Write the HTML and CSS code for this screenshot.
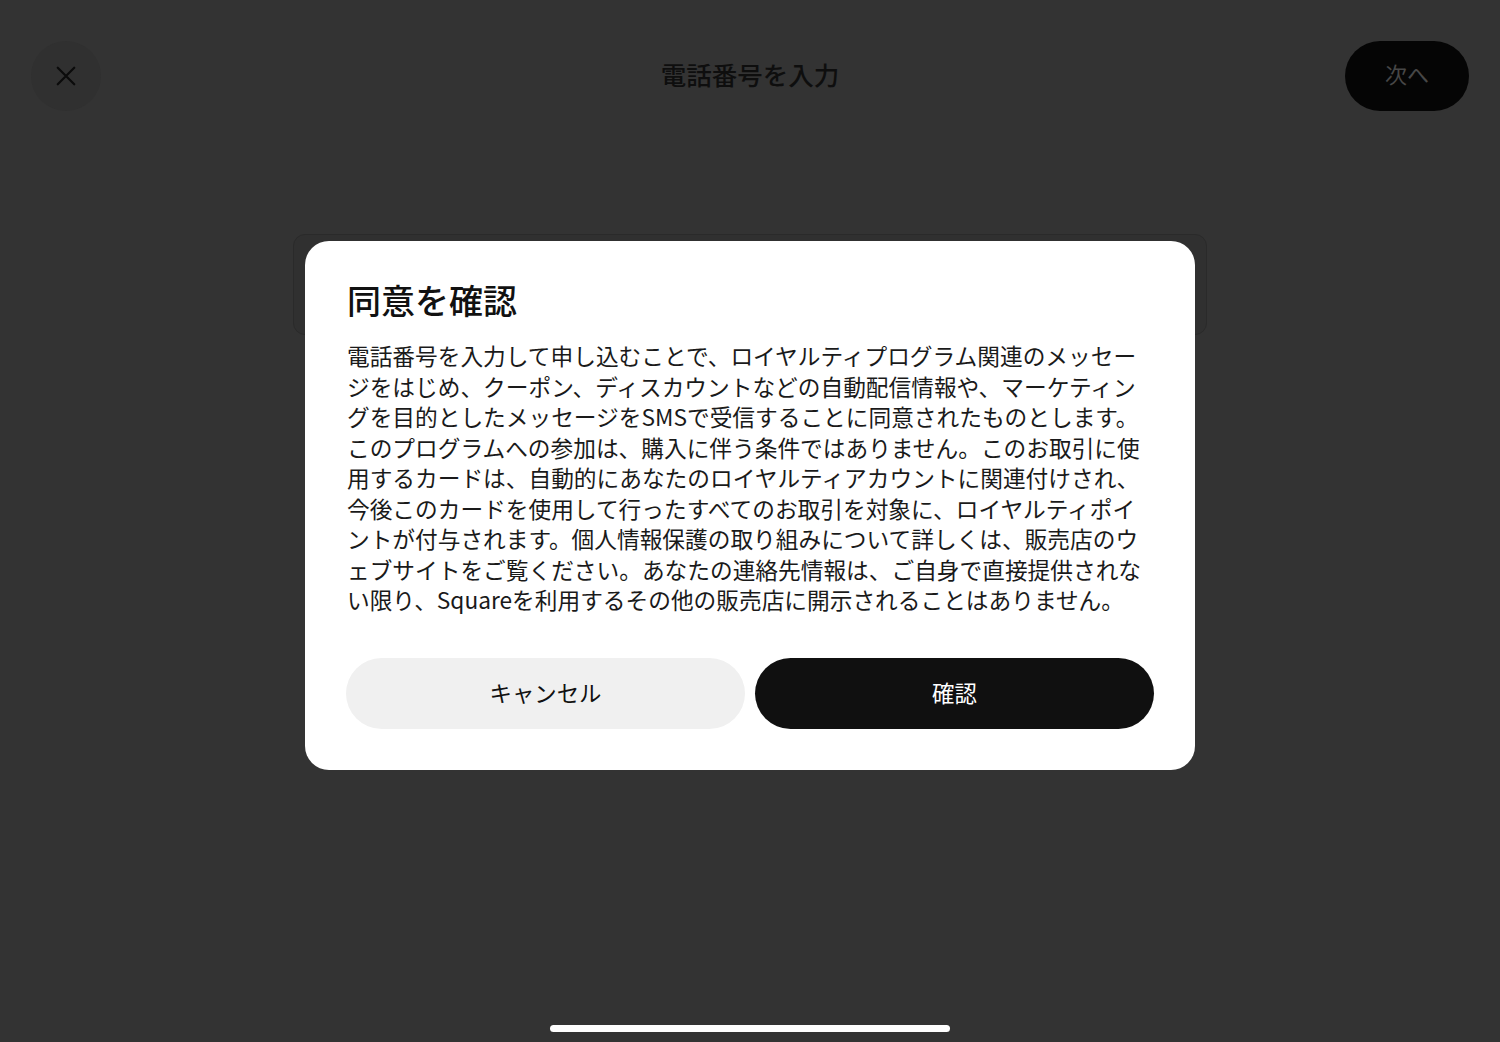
FILE: index.html
```html
<!DOCTYPE html>
<html lang="ja">
<head>
<meta charset="utf-8">
<title>電話番号を入力</title>
<link rel="stylesheet" href="styles.css">
</head>
<body>
<div class="page">
  <header class="topbar">
    <button class="close-btn" aria-label="閉じる">
      <svg width="24" height="24" viewBox="0 0 24 24" aria-hidden="true">
        <path d="M3 3 L21 21 M21 3 L3 21" stroke="#0b0b0b" stroke-width="2.4" stroke-linecap="round" fill="none"/>
      </svg>
    </button>
    <h1 class="page-title">電話番号を入力</h1>
    <button class="next-btn">次へ</button>
  </header>
  <main class="content">
    <div class="phone-field"></div>
  </main>
  <div class="home-indicator"></div>
</div>

<div class="overlay">
  <section class="dialog" role="dialog" aria-labelledby="dlg-title">
    <h2 id="dlg-title" class="dialog-title">同意を確認</h2>
    <p class="dialog-body">
      <span class="ln">電話番号を入力して申し込むことで、ロイヤルティプログラム関連のメッセー</span>
      <span class="ln">ジをはじめ、クーポン、ディスカウントなどの自動配信情報や、マーケティン</span>
      <span class="ln">グを目的としたメッセージをSMSで受信することに同意されたものとします。</span>
      <span class="ln">このプログラムへの参加は、購入に伴う条件ではありません。このお取引に使</span>
      <span class="ln">用するカードは、自動的にあなたのロイヤルティアカウントに関連付けされ、</span>
      <span class="ln">今後このカードを使用して行ったすべてのお取引を対象に、ロイヤルティポイ</span>
      <span class="ln">ントが付与されます。個人情報保護の取り組みについて詳しくは、販売店のウ</span>
      <span class="ln">ェブサイトをご覧ください。あなたの連絡先情報は、ご自身で直接提供されな</span>
      <span class="ln">い限り、Squareを利用するその他の販売店に開示されることはありません。</span>
    </p>
    <div class="dialog-actions">
      <button class="btn btn-secondary">キャンセル</button>
      <button class="btn btn-primary">確認</button>
    </div>
  </section>
</div>
</body>
</html>
```

FILE: styles.css
```css
* {
  box-sizing: border-box;
}

html, body {
  margin: 0;
  padding: 0;
}

body {
  background: #333333;
  font-family: "Noto Sans CJK JP", "Noto Sans", sans-serif;
  color: #111;
  width: 1500px;
  height: 1042px;
  overflow: hidden;
}

.page {
  height: 1042px;
  display: flex;
  flex-direction: column;
}

.topbar {
  display: grid;
  grid-template-columns: 1fr auto 1fr;
  align-items: center;
  padding: 41px 31px 0 31px;
}

.close-btn {
  justify-self: start;
  width: 70px;
  height: 70px;
  border-radius: 50%;
  border: none;
  background: #303030;
  display: flex;
  align-items: center;
  justify-content: center;
  padding: 0;
}

.close-btn svg {
  width: 22px;
  height: 22px;
}

.page-title {
  margin: 0 0 4px 0;
  font-size: 25.5px;
  font-weight: 500;
  color: #0e0e0e;
  line-height: 34px;
}

.next-btn {
  justify-self: end;
  width: 124px;
  height: 70px;
  border-radius: 35px;
  border: none;
  background: #050505;
  color: #474747;
  font-family: inherit;
  font-size: 22px;
  font-weight: 400;
  padding: 0 0 6px 0;
}

.content {
  display: flex;
  justify-content: center;
  padding-top: 123px;
}

.phone-field {
  width: 914px;
  height: 101px;
  border-radius: 12px;
  background: #303030;
  border: 1px solid #2a2a2a;
}

.home-indicator {
  margin: auto auto 10px auto;
  width: 400px;
  height: 7px;
  border-radius: 4px;
  background: #ffffff;
}

.overlay {
  position: fixed;
  inset: 0;
  display: flex;
  justify-content: center;
  align-items: flex-start;
  padding-top: 241px;
}

.dialog {
  width: 890px;
  background: #ffffff;
  border-radius: 24px;
  padding: 36px 41px 41px 42px;
}

.dialog-title {
  margin: 0;
  font-size: 34px;
  font-weight: 500;
  line-height: 46px;
  color: #111111;
}

.dialog-body {
  margin: 18px 0 0 0;
  font-size: 22.7px;
  line-height: 30.5px;
  color: #1a1a1a;
  font-weight: 400;
}

.dialog-body .ln {
  display: block;
  white-space: nowrap;
}

.dialog-actions {
  display: grid;
  grid-template-columns: 1fr 1fr;
  gap: 10px;
  margin-top: 42px;
  margin-left: -1px;
}

.btn {
  height: 71px;
  border-radius: 36px;
  border: none;
  font-family: inherit;
  font-size: 22.4px;
  font-weight: 400;
  padding: 0 0 2px 0;
}

.btn-secondary {
  background: #f0f0f0;
  color: #111111;
}

.btn-primary {
  background: #101010;
  color: #ffffff;
}
```
